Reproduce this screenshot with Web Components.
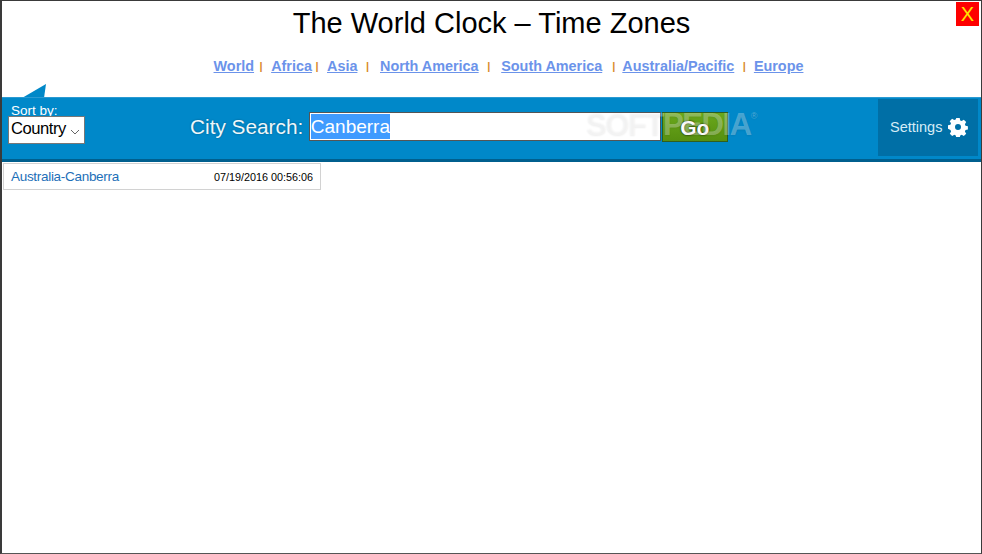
<!DOCTYPE html>
<html><head><meta charset="utf-8">
<style>
html,body{margin:0;padding:0;background:#fff}
body{font-family:"Liberation Sans",Arial,sans-serif;width:982px;height:554px;overflow:hidden}
</style></head><body>
<clock-app>
  <clock-header></clock-header>
  <clock-toolbar></clock-toolbar>
  <clock-row city="Australia-Canberra" time="07/19/2016 00:56:06"></clock-row>
</clock-app>
<script>
function def(name,html,init){
  customElements.define(name,class extends HTMLElement{
    constructor(){super();this.attachShadow({mode:'open'}).innerHTML=html;}
    connectedCallback(){if(init)init(this,this.shadowRoot);}
  });
}
def('clock-app',`<style>
:host{display:block;box-sizing:border-box;width:982px;height:554px;border:2px solid #3a3a3a;border-top-width:1px;border-bottom-width:1px;border-right-width:1px;border-bottom-color:#555;position:relative;overflow:hidden}
</style><slot></slot>`);
def('clock-header',`<style>
:host{display:flex;flex-direction:column;align-items:center;height:96px;box-sizing:border-box;position:relative}
h1{margin:0;padding:6px 0 0 0;height:49px;box-sizing:border-box;font:400 29px/32px "Liberation Sans",sans-serif;color:#000;width:100%;text-align:center}
nav{display:flex;font:700 14.4px/18px "Liberation Sans",sans-serif;margin:7px 0 0 34px;white-space:nowrap}
a{color:#6b93ea;text-decoration:underline}
i{font-style:normal;font-weight:700;font-size:11px;color:#d98a2b;}
.x{position:absolute;top:1px;right:2px;width:23px;height:24px;background:#fe0000;color:#ffe600;font:400 20px/24px "Liberation Sans",sans-serif;text-align:center}
.tail{position:absolute;left:20px;bottom:-1px}
</style>
<h1>The World Clock – Time Zones</h1>
<nav>
<a>World</a><i style="margin:0 8.5px 0 5.5px">|</i><a>Africa</a><i style="margin:0 8.5px 0 3.5px">|</i><a>Asia</a><i style="margin:0 11px 0 8.5px">|</i><a>North America</a><i style="margin:0 11px 0 8.5px">|</i><a>South America</a><i style="margin:0 7px 0 10px">|</i><a>Australia/Pacific</a><i style="margin:0 8px 0 8.5px">|</i><a>Europe</a>
</nav>
<div class="x">X</div>
<svg class="tail" width="26" height="16" viewBox="0 0 26 16"><path d="M0 16 L24 2 L22 16 Z" fill="#0088c8"/></svg>`);
def('clock-toolbar',`<style>
:host{display:flex;align-items:stretch;height:65px;box-sizing:border-box;background:#0088c9;border-top:1px solid #2a9ad2;border-bottom:3px solid #005f8e;color:#fff;position:relative}
.sort{width:85px;flex:none;position:relative;padding:6px 0 0 9px;box-sizing:border-box;font-size:13.5px;line-height:14px}
.sel{position:absolute;left:6px;top:18px;width:77px;height:28px;box-sizing:border-box;background:#fff;border:1px solid #777;color:#000;font-size:16.6px;line-height:24px;padding-left:2px;letter-spacing:-.45px}
.sel svg{position:absolute;right:4px;top:12px}
.search{flex:1;display:flex;align-items:flex-start;padding-top:14px}
label{font-size:20.8px;line-height:30px;margin-left:103px;text-shadow:0 0 2px rgba(0,0,0,.35);color:#eef7fb}
.input{margin-left:5.5px;width:352px;height:29px;box-sizing:border-box;background:#fff;border:1px solid #555;padding:1px 0 0 1px;font-size:19px;line-height:25px}
.input span{display:inline-block;background:#3f9bff;color:#fff;height:25px}
.go{width:66px;height:30px;box-sizing:border-box;margin-left:1px;background:linear-gradient(#6aa81c,#568f10);border:1px solid #2f5e1e;color:#fff;font:700 21px/30px "Liberation Sans",sans-serif;text-align:center;text-shadow:0 0 2px #000}
.mark{position:absolute;left:584px;top:9px;font:700 31px/36px "Liberation Sans",sans-serif;color:rgba(255,255,255,.3);letter-spacing:-1.4px;pointer-events:none;white-space:nowrap;text-shadow:0 1px 2px rgba(0,0,0,.07)}
.mark sup{font-size:9px;line-height:0;font-weight:400;vertical-align:16px;letter-spacing:0}
.settings{width:100px;flex:none;margin:1px 3px 0 0;height:57px;background:#006fa6;display:flex;align-items:center;box-sizing:border-box;padding:0 0 2px 12px;font-size:14.5px;color:#d5ecf7;gap:6px}
</style>
<div class="sort">Sort by:<div class="sel">Country<svg width="10" height="6" viewBox="0 0 10 6"><path d="M1 1l4 4 4-4" fill="none" stroke="#666" stroke-width="1"/></svg></div></div>
<div class="search"><label>City Search:</label><div class="input"><span>Canberra</span></div><div class="go">Go</div></div>
<div class="mark">SOFTPEDIA<sup>®</sup></div>
<div class="settings">Settings<svg width="20" height="20" viewBox="0 0 20 20"><path fill="#fff" fill-rule="evenodd" d="M8.3 1h3.4l.5 2.4 1.5.6 2.1-1.3 2.4 2.4-1.3 2.1.6 1.5 2.4.5v3.4l-2.4.5-.6 1.5 1.3 2.1-2.4 2.4-2.1-1.3-1.5.6-.5 2.4H8.3l-.5-2.4-1.5-.6-2.1 1.3-2.4-2.4 1.3-2.1-.6-1.5L0 11.7V8.3l2.4-.5.6-1.5-1.3-2.1 2.4-2.4 2.1 1.3 1.5-.6zM10 7a3 3 0 1 0 0 6 3 3 0 0 0 0-6z"/></svg></div>`);
def('clock-row',`<style>
:host{display:flex;justify-content:space-between;align-items:center;box-sizing:border-box;width:318px;height:27px;margin:1px 0 0 1px;border:1px solid #d2d2d2;padding:0 7px 0 7px}
a{color:#1d6fb8;font-size:13.5px;letter-spacing:-.3px}
span{color:#000;font-size:10.8px}
</style><a></a><span></span>`,(el,s)=>{s.querySelector('a').textContent=el.getAttribute('city');s.querySelector('span').textContent=el.getAttribute('time');});
</script></body></html>
